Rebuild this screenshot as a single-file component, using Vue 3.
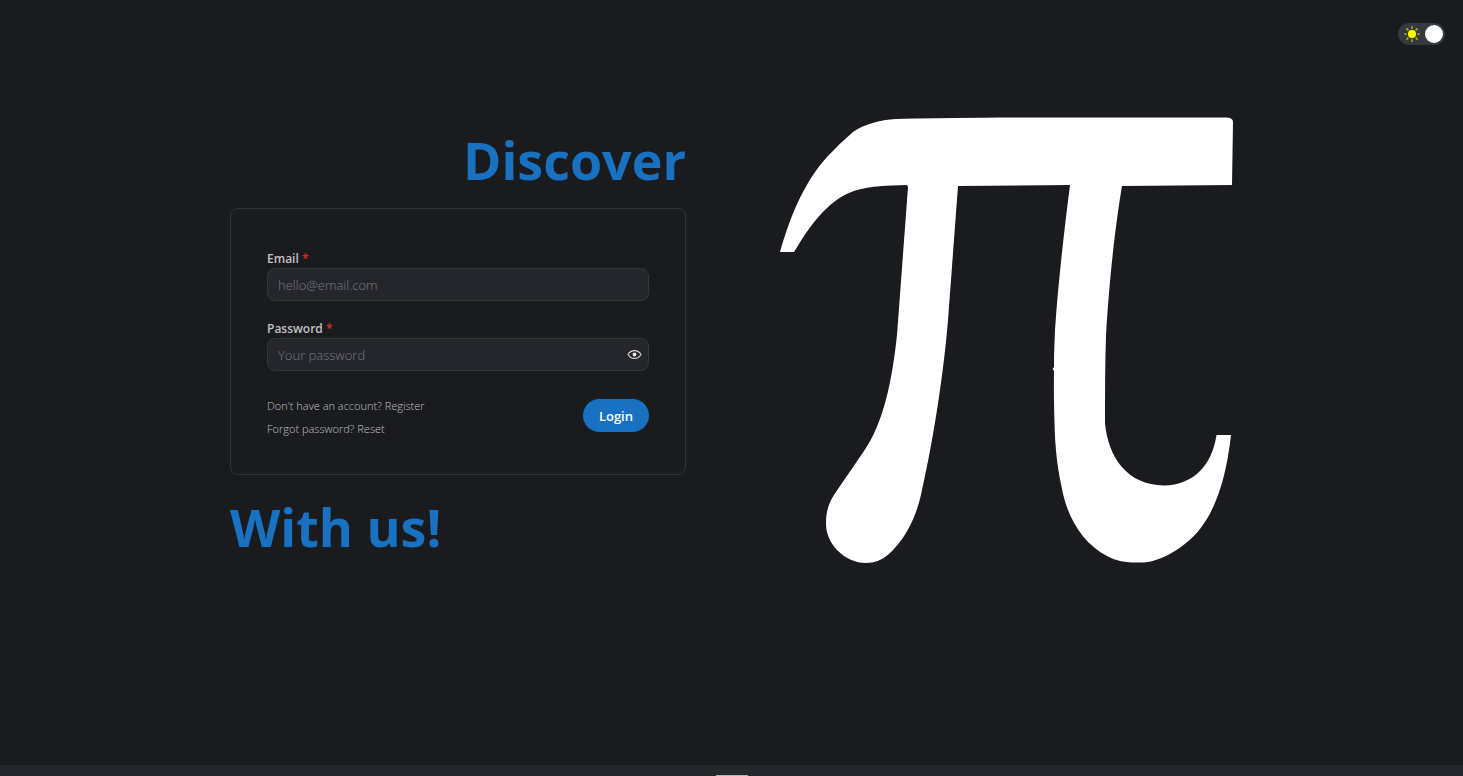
<script setup>
import { ref } from 'vue'

const dark = ref(true)
const email = ref('')
const password = ref('')
const visible = ref(false)
</script>

<template>
  <div class="page">
    <header class="top">
      <label class="switch">
        <input v-model="dark" type="checkbox" aria-label="Toggle color scheme" />
        <svg class="sun" viewBox="0 0 16 16" aria-hidden="true">
          <circle cx="8" cy="8" r="4" fill="#ffff00" />
          <path
            d="M8 .8v1.400M8 13.800v1.400M.8 8h1.400M13.800 8h1.400M2.900 2.900l1 1M12.100 12.100l1 1M2.900 13.100l1-1M12.100 3.900l1-1"
            stroke="#b5b50c"
            stroke-width="1.500"
            stroke-linecap="round"
          />
        </svg>
        <span class="knob"></span>
      </label>
    </header>

    <main class="content">
      <section class="intro">
        <h1 class="title end">Discover</h1>
        <form class="card" @submit.prevent>
          <div class="field">
            <label for="email">Email <span class="star">*</span></label>
            <input id="email" v-model="email" type="email" placeholder="hello@email.com" />
          </div>
          <div class="field">
            <label for="password">Password <span class="star">*</span></label>
            <div class="box">
              <input
                id="password"
                v-model="password"
                :type="visible ? 'text' : 'password'"
                placeholder="Your password"
              />
              <button class="eye" type="button" aria-label="Show password" @click="visible = !visible">
                <svg viewBox="0 0 15 15" aria-hidden="true">
                  <path
                    fill="none"
                    stroke="#d5d6d8"
                    stroke-width="1.1"
                    d="M1 7.5C2.4 5 4.7 3.6 7.5 3.6S12.600 5 14 7.500C12.600 10 10.300 11.400 7.500 11.400S2.400 10 1 7.500Z"
                  />
                  <circle cx="7.5" cy="7.500" r="1.900" fill="#e8e9ea" />
                </svg>
              </button>
            </div>
          </div>
          <div class="actions">
            <div class="links">
              <a href="#register">Don't have an account? Register</a>
              <a href="#reset">Forgot password? Reset</a>
            </div>
            <button class="login" type="submit">Login</button>
          </div>
        </form>
        <h1 class="title">With us!</h1>
      </section>

      <svg class="logo" viewBox="777 116 456 450" role="img" aria-label="Pi logo">
        <path
          fill="#fff"
          d="M780 252C791 213 806 180 827 157Q840 143 853 132C864 124 880 120 896 119Q930 118 1000 117.500H1226Q1233 117.500 1233 122L1232 185L1122 186C1116 222 1110 270 1106 335C1105 365 1105 395 1105 423C1108 457 1127 485 1164 485.500C1194 485 1212 465 1216.500 435H1231C1226 480 1215 510 1200 529C1184 549 1159 562 1143 562.500C1128 563 1118 562 1107 556C1084 544 1068 520 1062 489C1058 470 1056 455 1055 437Q1053.500 400 1054 371L1052.500 369L1054 367V356L1055 330C1058 285 1064 232 1070 185L958 186L948 320C944 370 934 437 922 490C916 520 904 540 889 554Q879 563 866 563C845 563 826 544 826 524C826 510 829 501 838 489L864 451C883 424 892 382 897 335L908 187L907 185C865 186 848 188 826 209C815 219 805 234 794 252Z"
        />
      </svg>
    </main>

    <footer class="footer"><span class="mark"></span></footer>
  </div>
</template>

<style>
body {
  margin: 0;
  background: #1a1b1e;
}
</style>

<style scoped>
.page {
  height: 100vh;
  overflow: hidden;
  display: flex;
  flex-direction: column;
  color: #c1c2c5;
  background: #1a1b1e;
  font-family: "Open Sans", "Noto Sans", sans-serif;
  font-size: 12px;
}
.page * {
  box-sizing: border-box;
}
.top {
  display: flex;
  justify-content: flex-end;
  padding: 23px 18px 0;
}
.switch {
  position: relative;
  display: flex;
  align-items: center;
  justify-content: space-between;
  width: 47px;
  height: 22px;
  padding: 0 2px 0 6px;
  border-radius: 11px;
  background: #343a40;
  cursor: pointer;
}
.switch input {
  position: absolute;
  inset: 0;
  margin: 0;
  opacity: 0;
}
.sun {
  width: 16px;
  height: 16px;
}
.knob {
  width: 18px;
  height: 18px;
  border-radius: 50%;
  background: #fff;
}
.content {
  flex: 1 0 auto;
  display: grid;
  grid-template-columns: 1fr 1fr;
  gap: 91px;
  align-items: start;
  width: 100%;
  max-width: 1003px;
  margin: 0 auto;
  padding-top: 71px;
}
.intro {
  display: flex;
  flex-direction: column;
  gap: 12px;
  padding-top: 4px;
}
.title {
  margin: 0;
  padding-top: 4px;
  color: #1971c2;
  font-size: 52px;
  line-height: 72px;
  font-weight: 700;
}
.end {
  text-align: right;
}
.card {
  padding: 41px 36px 37px;
  border: 1px solid #303237;
  border-radius: 8px;
}
.field {
  margin-bottom: 19px;
}
.field label {
  display: block;
  font-weight: 600;
  line-height: 18px;
}
.star {
  color: #e03131;
}
.field input {
  display: block;
  width: 100%;
  height: 33px;
  padding: 0 10px;
  border: 1px solid #34363b;
  border-radius: 8px;
  outline: none;
  background: #25262b;
  color: #c1c2c5;
  font: inherit;
  font-size: 13px;
}
.field input::placeholder {
  color: #787b83;
  font-weight: 300;
  opacity: 1;
}
.box {
  position: relative;
}
.eye {
  position: absolute;
  top: 0;
  right: 0;
  display: grid;
  place-items: center;
  width: 30px;
  height: 32px;
  padding: 0;
  border: 0;
  background: none;
}
.eye svg {
  width: 15px;
  height: 15px;
}
.actions {
  display: flex;
  align-items: flex-start;
  justify-content: space-between;
  margin-top: 27px;
}
.links {
  display: flex;
  flex-direction: column;
  gap: 7px;
}
.links a {
  color: #c1c2c5;
  font-size: 11px;
  font-weight: 300;
  line-height: 16px;
  text-decoration: none;
}
.login {
  height: 33px;
  margin-top: 1px;
  padding: 0 16px;
  border: 0;
  border-radius: 17px;
  background: #1971c2;
  color: #fff;
  font: inherit;
  font-size: 13px;
  font-weight: 600;
}
.logo {
  display: block;
  width: 100%;
}
.footer {
  flex: none;
  display: flex;
  justify-content: center;
  height: 11px;
  padding-top: 10px;
  background: #25262b;
}
.mark {
  width: 32px;
  height: 32px;
  background: #b5b6b8;
}
</style>
